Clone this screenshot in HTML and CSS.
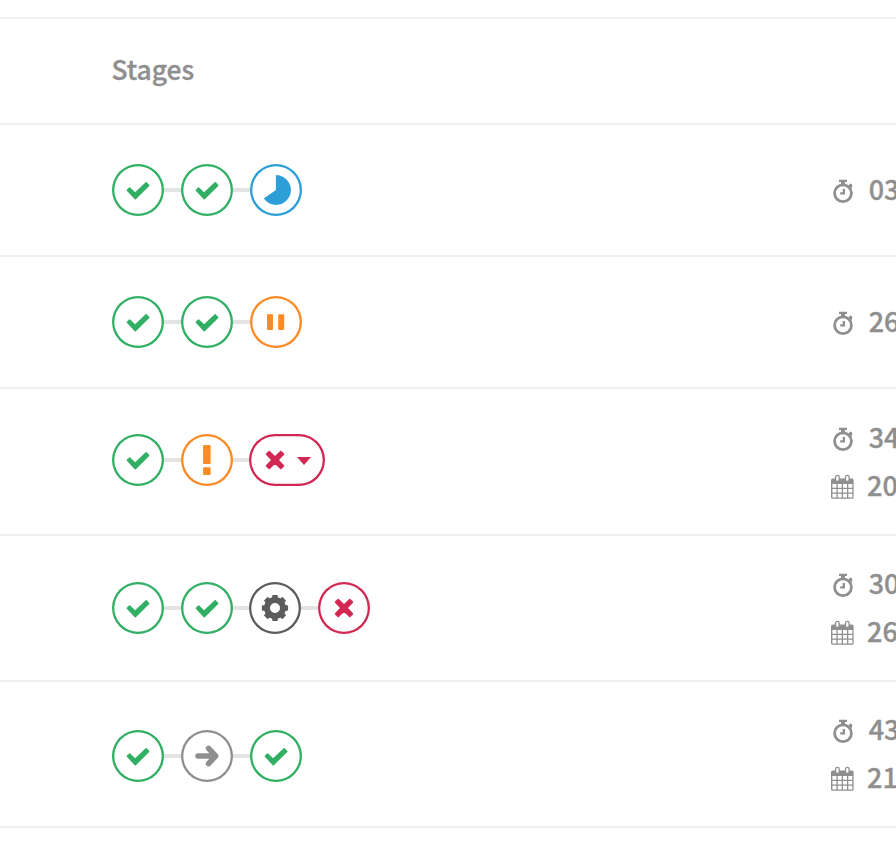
FILE: index.html
```html
<!DOCTYPE html>
<html lang="en">
<head>
<meta charset="utf-8">
<title>Pipelines</title>
<link rel="stylesheet" href="styles.css">
</head>
<body>
<svg class="defs" aria-hidden="true">
  <symbol id="check" viewBox="0 0 52 52"><path class="solid" d="M15.4 26.3 17.6 24.1 23.1 29.3 34.2 18.9 36.7 21.5 23.3 34.6Z"/></symbol>
  <symbol id="running" viewBox="0 0 52 52"><path d="M25.9 26V11.1A14.9 14.9 0 1 1 13.8 34.5Z"/></symbol>
  <symbol id="pause" viewBox="0 0 52 52"><rect x="17" y="18.2" width="6" height="15.7" rx=".9"/><rect x="28.2" y="18.2" width="6" height="15.7" rx=".9"/></symbol>
  <symbol id="warning" viewBox="0 0 52 52"><rect x="22.1" y="11.1" width="7.5" height="19" rx="1.2"/><rect x="22.1" y="33.3" width="7.5" height="7.8" rx="1.2"/></symbol>
  <symbol id="cross" viewBox="0 0 52 52"><path class="solid" d="M20.2 17.5 26 23 31.8 17.5 34.4 20.1 29 26 34.4 31.9 31.8 34.5 26 29 20.2 34.5 17.6 31.9 23 26 17.6 20.1Z"/></symbol>
  <symbol id="gear" viewBox="0 0 52 52">
    <circle cx="26" cy="26" r="8" fill="none" stroke="currentColor" stroke-width="6"/>
    <g id="teeth"><rect x="23.2" y="12.9" width="5.6" height="5" rx=".8"/><rect x="23.2" y="34.1" width="5.6" height="5" rx=".8"/><rect x="12.9" y="23.2" width="5" height="5.6" rx=".8"/><rect x="34.1" y="23.2" width="5" height="5.6" rx=".8"/></g>
    <use href="#teeth" transform="rotate(45 26 26)"/>
  </symbol>
  <symbol id="skip" viewBox="0 0 52 52"><path d="M17 26H33M27.6 18.4l7 7.6-7 7.6" fill="none" stroke="currentColor" stroke-width="5.6" stroke-linecap="round" stroke-linejoin="round"/></symbol>
  <symbol id="timer" viewBox="0 0 24 26"><circle cx="12" cy="14.2" r="8.4" fill="none" stroke="currentColor" stroke-width="2.8"/><path d="M8 .8h8v2.3h-2V5.1h-4V3.1H8ZM17.4 6.8l1.8-2.4 2 1.2v2.4l-1 1.3ZM11.7 9.9h2.3v5.5H9.2v-2.2h2.5Z"/></symbol>
  <symbol id="calendar" viewBox="0 0 24 26"><path d="M1.6 4.4h19.4a1.6 1.6 0 0 1 1.6 1.6v17.2a1.6 1.6 0 0 1-1.6 1.6H1.6A1.6 1.6 0 0 1 0 23.2V6A1.6 1.6 0 0 1 1.6 4.4Z"/><path fill="#fff" d="M1.4 10h4v3.7h-4zM6.7 10h4v3.7h-4zM12 10h4v3.7h-4zM17.3 10h4v3.7h-4zM1.4 14.9h4v3.7h-4zM6.7 14.9h4v3.7h-4zM12 14.9h4v3.7h-4zM17.3 14.9h4v3.7h-4zM1.4 19.8h4v3.6h-4zM6.7 19.8h4v3.6h-4zM12 19.8h4v3.6h-4zM17.3 19.8h4v3.6h-4z"/><rect x="4.6" y="1.4" width="3.6" height="6" rx="1.6" fill="#fff" stroke="currentColor" stroke-width="1.3"/><rect x="14.5" y="1.4" width="3.6" height="6" rx="1.6" fill="#fff" stroke="currentColor" stroke-width="1.3"/></symbol>
</svg>
<main class="table">
  <div class="row head"><div class="title">Stages</div></div>
  <div class="row short">
    <div class="stages">
      <span class="stage success"><svg><use href="#check"/></svg></span>
      <span class="stage success"><svg><use href="#check"/></svg></span>
      <span class="stage info"><svg><use href="#running"/></svg></span>
    </div>
    <div class="times"><div class="time"><svg><use href="#timer"/></svg><span>03</span></div></div>
  </div>
  <div class="row short">
    <div class="stages">
      <span class="stage success"><svg><use href="#check"/></svg></span>
      <span class="stage success"><svg><use href="#check"/></svg></span>
      <span class="stage pending"><svg><use href="#pause"/></svg></span>
    </div>
    <div class="times"><div class="time"><svg><use href="#timer"/></svg><span>26</span></div></div>
  </div>
  <div class="row third">
    <div class="stages">
      <span class="stage success"><svg><use href="#check"/></svg></span>
      <span class="stage pending"><svg><use href="#warning"/></svg></span>
      <span class="stage failed wide"><svg><use href="#cross"/></svg><i class="caret"></i></span>
    </div>
    <div class="times">
      <div class="time"><svg><use href="#timer"/></svg><span>34</span></div>
      <div class="time date"><svg><use href="#calendar"/></svg><span>20</span></div>
    </div>
  </div>
  <div class="row fourth">
    <div class="stages">
      <span class="stage success"><svg><use href="#check"/></svg></span>
      <span class="stage success"><svg><use href="#check"/></svg></span>
      <span class="stage manual"><svg><use href="#gear"/></svg></span>
      <span class="stage failed"><svg><use href="#cross"/></svg></span>
    </div>
    <div class="times">
      <div class="time"><svg><use href="#timer"/></svg><span>30</span></div>
      <div class="time date"><svg><use href="#calendar"/></svg><span>26</span></div>
    </div>
  </div>
  <div class="row fifth">
    <div class="stages">
      <span class="stage success"><svg><use href="#check"/></svg></span>
      <span class="stage skipped"><svg><use href="#skip"/></svg></span>
      <span class="stage success"><svg><use href="#check"/></svg></span>
    </div>
    <div class="times">
      <div class="time"><svg><use href="#timer"/></svg><span>43</span></div>
      <div class="time date"><svg><use href="#calendar"/></svg><span>21</span></div>
    </div>
  </div>
</main>
</body>
</html>
```
FILE: styles.css
```css
* { box-sizing: border-box; }
body {
  margin: 0;
  background: #fff;
  color: #8f8f8f;
  font: 500 27px/48px "Noto Sans CJK SC", "Open Sans", sans-serif;
  -webkit-text-stroke: .35px currentColor;
  overflow: hidden;
}
svg { display: block; fill: currentColor; }
.defs { display: none; }
.solid { stroke: currentColor; stroke-width: 1.6; stroke-linejoin: round; }

.table { margin-top: 17px; border-top: 2px solid #efefef; }
.row {
  display: grid;
  grid-template-columns: 719px 65px;
  align-items: start;
  padding-left: 112px;
  border-bottom: 2px solid #efefef;
}
.head { height: 106px; padding: 26px 0 0 111.4px; }
.title { font-size: 26.4px; }
.short { height: 132px; }
.third { height: 147px; }
.fourth, .fifth { height: 146px; }

.stages { display: flex; padding-top: 39px; }
.third .stages { padding-top: 45px; }
.fourth .stages { padding-top: 46px; }
.fifth .stages { padding-top: 48px; }
.stage {
  display: flex;
  align-items: center;
  position: relative;
  width: 52px;
  height: 52px;
  margin-right: 16.9px;
  border-radius: 26px;
  box-shadow: inset 0 0 0 2.3px currentColor;
}
.third .stage, .fourth .stage { margin-right: 16.7px; }
.stage svg { width: 52px; height: 52px; flex: none; }
.stage + .stage::before {
  content: "";
  position: absolute;
  z-index: -1;
  right: 100%;
  top: 24px;
  width: 17px;
  height: 4px;
  background: #e3e3e3;
}
.stage.wide { width: 76px; }
.caret {
  margin-left: -4.4px;
  margin-top: 2px;
  border: 7px solid transparent;
  border-top: 8px solid;
  border-bottom: 0;
}
.success { color: #31af64; }
.info { color: #2d9fd8; }
.pending { color: #fc8a25; }
.failed { color: #d22852; }
.manual { color: #5c5c5c; }
.skipped { color: #8f8f8f; }

.times { padding-top: 40px; }
.third .times { padding-top: 24px; }
.fourth .times { padding-top: 23px; }
.fifth .times { padding-top: 23px; }
.time { display: flex; height: 48px; gap: 13.7px; }
.time svg { width: 24px; height: 26px; flex: none; margin-top: 14px; }
.time.date { gap: 12px; }
.time.date svg { margin-top: 13px; }
.time span { white-space: nowrap; }
```
